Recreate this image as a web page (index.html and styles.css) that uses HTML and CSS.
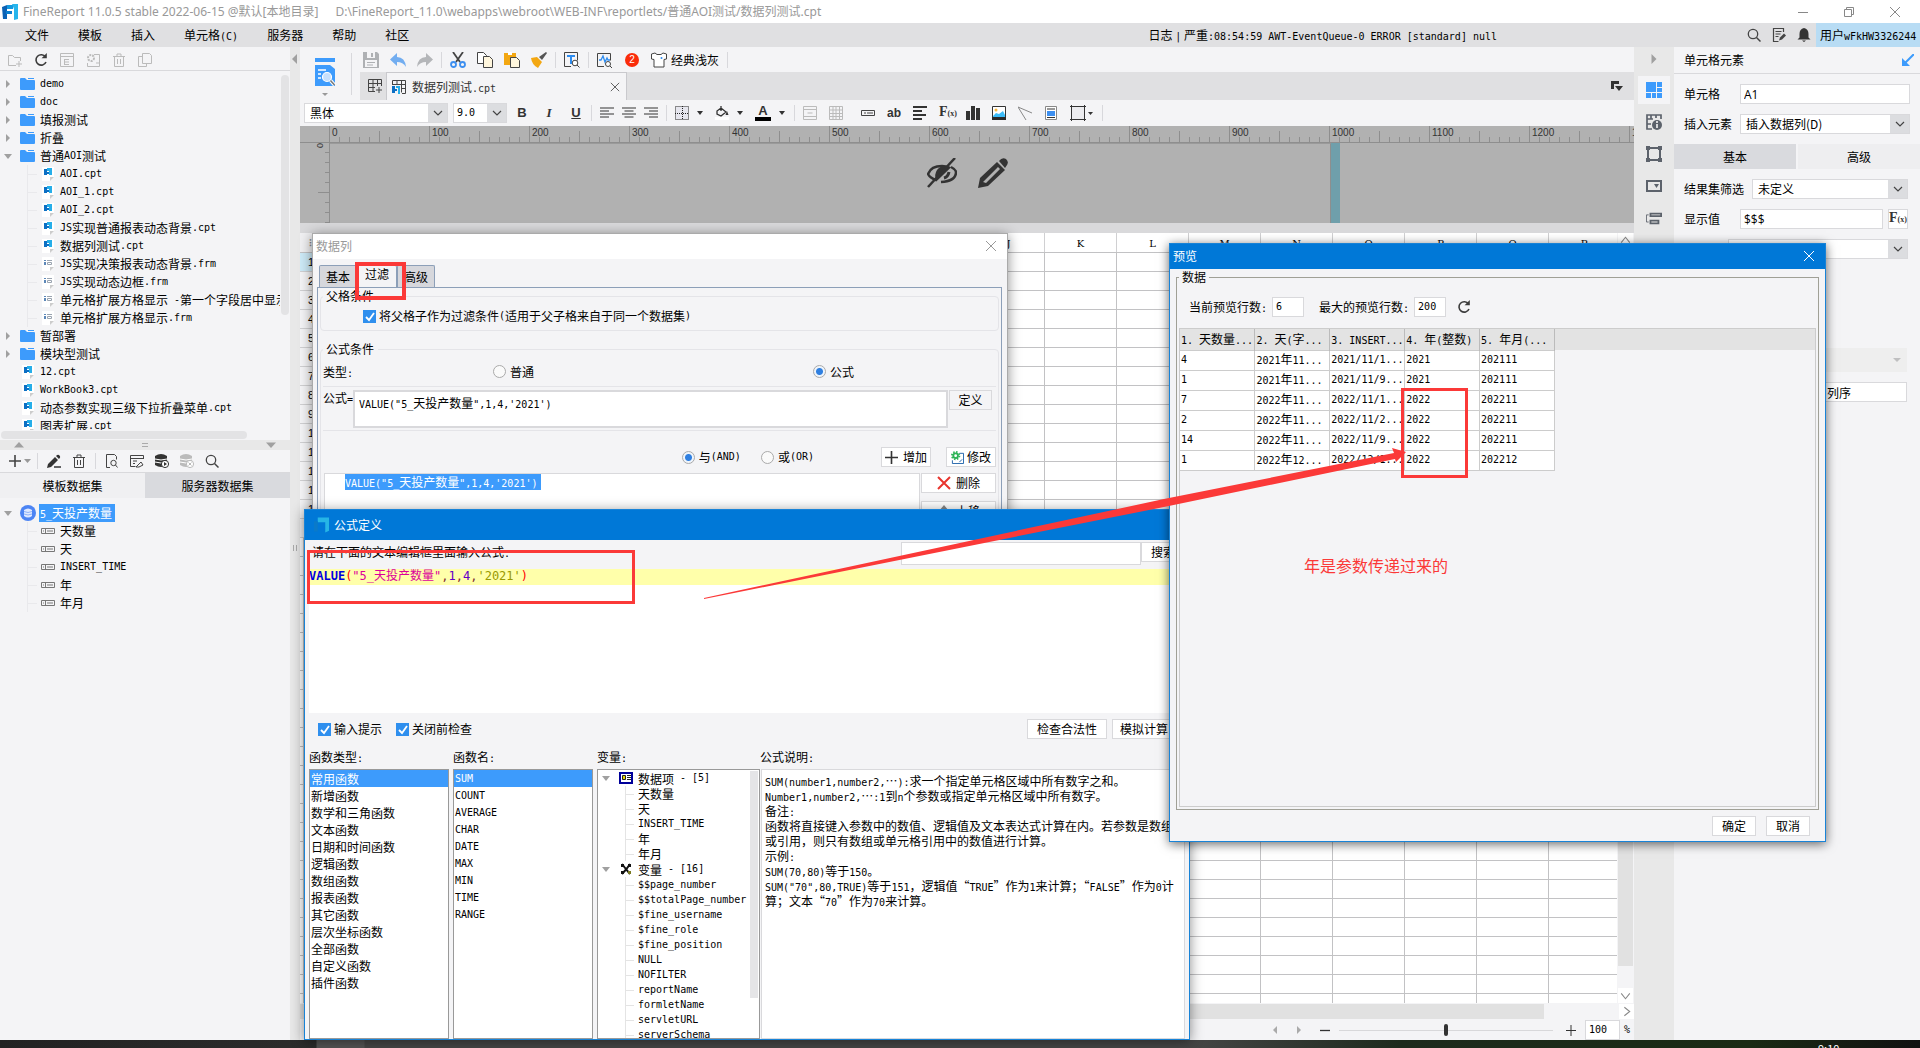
FILE: index.html
```html
<!DOCTYPE html>
<html lang="zh-CN">
<head>
<meta charset="utf-8">
<title>FineReport 11.0.5</title>
<link rel="stylesheet" href="styles.css">
</head>
<body>
<svg class="defs" aria-hidden="true">
  <symbol id="logo" viewBox="0 0 16 16"><path d="M0 3l5-2v14H1z" fill="#0b62b5"/><path d="M5 1h6v4H5z" fill="#1499e0"/><path d="M4 7h6v3H4z" fill="#0b7fd0"/><path d="M10 0h6v15l-4 1V5z" fill="#26b5ec"/></symbol>
  <symbol id="folder" viewBox="0 0 15 12"><path d="M0 1q0-1 1-1h4l2 2h7q1 0 1 1v8q0 1-1 1H1q-1 0-1-1z" fill="#3d9bfc"/><path d="M8 .5h6" stroke="#3d9bfc" fill="none"/></symbol>
  <symbol id="cpt" viewBox="0 0 12 14"><path d="M0 0h12v10l-4 4H0z" fill="#fff"/><path d="M8 14v-4h4z" fill="#ccc"/><path d="M2 2h3v6H2zM5 5h2v2H5z" fill="#0b6fc4"/><path d="M5 1h5v7H7V4H5z" fill="#26aee9"/></symbol>
  <symbol id="frm" viewBox="0 0 12 14"><path d="M0 0h12v10l-4 4H0z" fill="#fff"/><path d="M8 14v-4h4z" fill="#ccc"/><path d="M2 3h2v1H2zM2 5h2v3H2z" fill="#5c87b8"/><path d="M5 3.500h5M5.500 5.500h4v2h-4z" stroke="#9aa4b0" fill="none"/></symbol>
  <symbol id="field" viewBox="0 0 14 6"><path d="M.5.5h13v5H.5zM4.500 1v4M6 3h6M2 3h1" stroke="#777" fill="none"/></symbol>
  <symbol id="open" viewBox="0 0 8 8"><path d="M0 2h8L4 7z" fill="#a0a0a0"/></symbol>
  <symbol id="shut" viewBox="0 0 8 8"><path d="M2 0v8l4-4z" fill="#a0a0a0"/></symbol>
  <symbol id="refresh" viewBox="0 0 14 14"><path d="M11.500 4A5.200 5.200 0 1 0 12 9" stroke="#3c3c3c" stroke-width="1.600" fill="none"/><path d="M12.800 0v5.200H7.600z" fill="#3c3c3c"/></symbol>
  <symbol id="trash" viewBox="0 0 14 14"><path d="M1 3.500h12M5 3V1h4v2M2.500 4v9.500h9V4M5.500 6v5M8.500 6v5" stroke="currentColor" fill="none"/></symbol>
  <symbol id="search" viewBox="0 0 14 14"><circle cx="6" cy="6" r="4.700" stroke="#444" stroke-width="1.300" fill="none"/><path d="M9.500 9.500l4 4" stroke="#444" stroke-width="1.500"/></symbol>
  <symbol id="close" viewBox="0 0 12 12"><path d="M1 1l10 10M11 1L1 11" stroke="currentColor" fill="none"/></symbol>
  <symbol id="caret" viewBox="0 0 8 8"><path d="M1 2h6L4 6z" fill="#333"/></symbol>
  <symbol id="al" viewBox="0 0 14 12"><path d="M0 1h14M0 4h9M0 7h14M0 10h9" stroke="#333" stroke-width="1.200"/></symbol>
  <symbol id="ac" viewBox="0 0 14 12"><path d="M0 1h14M2.500 4h9M0 7h14M2.500 10h9" stroke="#333" stroke-width="1.200"/></symbol>
  <symbol id="ar" viewBox="0 0 14 12"><path d="M0 1h14M5 4h9M0 7h14M5 10h9" stroke="#333" stroke-width="1.200"/></symbol>
</svg>

<header class="titlebar">
  <svg class="i16"><use href="#logo"/></svg>
  <span class="app-name">FineReport 11.0.5 stable 2022-06-15 @默认[本地目录]</span>
  <span>D:\FineReport_11.0\webapps\webroot\WEB-INF\reportlets/普通AOI测试/数据列测试.cpt</span>
  <div class="win-buttons">
    <svg viewBox="0 0 12 12"><path d="M1 6.500h10" stroke="#888"/></svg>
    <svg viewBox="0 0 12 12"><path d="M1.500 3.500h7v7h-7zM3.500 3V1.500h7v7H9" stroke="#888" fill="none"/></svg>
    <svg><use href="#close"/></svg>
  </div>
</header>

<nav class="menubar">
  <a href="#">文件</a><a href="#">模板</a><a href="#">插入</a><a href="#">单元格<span class="en">(C)</span></a><a href="#">服务器</a><a href="#">帮助</a><a href="#">社区</a>
  <span class="log">日志 <span class="en">|</span> 严重<span class="en">:08:54:59 AWT-EventQueue-0 ERROR [standard] null</span></span>
  <span class="menu-icons">
    <svg><use href="#search"/></svg>
    <svg viewBox="0 0 14 14"><path d="M11.500 4V.5h-10v13h5M3.500 3.500h6M3.500 6h5M3.500 8.500h3" stroke="#444" fill="none" stroke-width="1.200"/><path d="M7 12.500l1-3 4-4 2 2-4 4z" fill="#444"/></svg>
    <svg viewBox="0 0 14 14"><path d="M7 0q4.500 1 4.500 6v3.500l2 2H.5l2-2V6Q2.500 1 7 0zM5 12.500h4L7 14z" fill="#333"/></svg>
  </span>
  <a href="#" class="user">用户<span class="en">wFkHW3326244</span></a>
</nav>

<main class="workspace">
  <aside class="left">
    <div class="bar files-bar">
      <svg viewBox="0 0 14 14"><path d="M8 12.500H.5v-10h4l2 2h6V8M11 8v6M8 11h6" stroke="#bbb" fill="none"/></svg>
      <svg><use href="#refresh"/></svg>
      <svg viewBox="0 0 14 14"><path d="M.5.5h13v13H.5zM.5 3.500h13M4.500 6v6M5 6.500h4M5 9h4M5 11.500h4" stroke="#bbb" fill="none"/></svg>
      <svg viewBox="0 0 14 14"><circle cx="5" cy="5" r="3" stroke="#bbb" stroke-width="2" stroke-dasharray="2 1" fill="none"/><path d="M8 1.500h5.500v12H1.500V10M10 10h3" stroke="#bbb" fill="none"/></svg>
      <svg class="dim"><use href="#trash"/></svg>
      <svg viewBox="0 0 14 14"><path d="M4.500.5h7l2 2v8h-9zM4 3.500H.5v10h8V11" stroke="#bbb" fill="none"/></svg>
    </div>
    <div class="tree-scroll">
      <div class="tree-area">
        <ul class="tree">
          <li><svg class="tw"><use href="#shut"/></svg><svg class="fd"><use href="#folder"/></svg><span class="en">demo</span></li>
          <li><svg class="tw"><use href="#shut"/></svg><svg class="fd"><use href="#folder"/></svg><span class="en">doc</span></li>
          <li><svg class="tw"><use href="#shut"/></svg><svg class="fd"><use href="#folder"/></svg>填报测试</li>
          <li><svg class="tw"><use href="#shut"/></svg><svg class="fd"><use href="#folder"/></svg>折叠</li>
          <li><svg class="tw"><use href="#open"/></svg><svg class="fd"><use href="#folder"/></svg>普通<span class="en">AOI</span>测试</li>
          <li class="kid"><svg class="fl"><use href="#cpt"/></svg><span class="en">AOI.cpt</span></li>
          <li class="kid"><svg class="fl"><use href="#cpt"/></svg><span class="en">AOI_1.cpt</span></li>
          <li class="kid"><svg class="fl"><use href="#cpt"/></svg><span class="en">AOI_2.cpt</span></li>
          <li class="kid"><svg class="fl"><use href="#cpt"/></svg><span class="en">JS</span>实现普通报表动态背景<span class="en">.cpt</span></li>
          <li class="kid"><svg class="fl"><use href="#cpt"/></svg>数据列测试<span class="en">.cpt</span></li>
          <li class="kid"><svg class="fl"><use href="#frm"/></svg><span class="en">JS</span>实现决策报表动态背景<span class="en">.frm</span></li>
          <li class="kid"><svg class="fl"><use href="#frm"/></svg><span class="en">JS</span>实现动态边框<span class="en">.frm</span></li>
          <li class="kid"><svg class="fl"><use href="#frm"/></svg>单元格扩展方格显示<span class="en"> -</span>第一个字段居中显示<span class="en">.frm</span></li>
          <li class="kid"><svg class="fl"><use href="#frm"/></svg>单元格扩展方格显示<span class="en">.frm</span></li>
          <li><svg class="tw"><use href="#shut"/></svg><svg class="fd"><use href="#folder"/></svg>暂部署</li>
          <li><svg class="tw"><use href="#shut"/></svg><svg class="fd"><use href="#folder"/></svg>模块型测试</li>
          <li class="root-file"><svg class="fl"><use href="#cpt"/></svg><span class="en">12.cpt</span></li>
          <li class="root-file"><svg class="fl"><use href="#cpt"/></svg><span class="en">WorkBook3.cpt</span></li>
          <li class="root-file"><svg class="fl"><use href="#cpt"/></svg>动态参数实现三级下拉折叠菜单<span class="en">.cpt</span></li>
          <li class="root-file"><svg class="fl"><use href="#cpt"/></svg>图表扩展<span class="en">.cpt</span></li>
        </ul>
        <div class="vthumb"></div>
      </div>
      <div class="hthumb"></div>
    </div>
    <div class="hsplit"><svg viewBox="0 0 10 6"><path d="M0 5.500h10L5 0z" fill="#a0a0a0"/></svg><svg viewBox="0 0 10 6"><path d="M2 1.500h6M2 4.500h6" stroke="#aaa"/></svg><svg viewBox="0 0 10 6"><path d="M0 .5h10L5 6z" fill="#a0a0a0"/></svg></div>
    <div class="bar data-bar">
      <svg class="wide" viewBox="0 0 22 14"><path d="M6 1v12M0 7h12" stroke="#444" stroke-width="1.600"/><path d="M15 5h7l-3.500 4z" fill="#999"/></svg>
      <span class="sep"></span>
      <svg viewBox="0 0 14 14"><path d="M0 14l1-4 7-7 3 3-7 7zM9 2q2-2 3.500-.5T12 5z" fill="#333"/><path d="M7 13h7" stroke="#333" stroke-width="1.500"/></svg>
      <svg><use href="#trash"/></svg>
      <span class="sep"></span>
      <svg viewBox="0 0 14 14"><path d="M5 13.500H1.500V.5h8l2 2v3" stroke="#444" fill="none"/><circle cx="8.500" cy="9" r="2.700" stroke="#444" fill="none"/><path d="M10.500 11l2 2.500" stroke="#444"/></svg>
      <svg viewBox="0 0 14 14"><path d="M13.500 5V1.500H.5v11h5M.5 4.500h13M3 7h4M3 9.500h2" stroke="#444" fill="none"/><path d="M6 13l5-5 2 3-4 2z" fill="none" stroke="#444"/></svg>
      <svg viewBox="0 0 14 14"><path d="M0 2q6-4 12 0v9q-6 4-12 0z" fill="#333"/><path d="M0 5q6 2 12 0M0 8q6 2 12 0" stroke="#fff" fill="none"/><circle cx="10" cy="10" r="3.600" fill="#fff" stroke="#333"/><path d="M9 8v4l3-2z" fill="#333"/></svg>
      <svg viewBox="0 0 14 14"><path d="M0 2q6-4 12 0v9q-6 4-12 0z" fill="#bbb"/><path d="M0 5q6 2 12 0M0 8q6 2 12 0" stroke="#fff" fill="none"/><circle cx="10" cy="10" r="3.600" fill="#fff" stroke="#bbb"/><path d="M8.500 8.500l3 3M11.500 8.500l-3 3" stroke="#bbb"/></svg>
      <svg><use href="#search"/></svg>
    </div>
    <div class="tabs2"><button class="on">模板数据集</button><button>服务器数据集</button></div>
    <ul class="tree datasets">
      <li><svg class="tw"><use href="#open"/></svg><svg class="db" viewBox="0 0 16 16"><circle cx="8" cy="8" r="8" fill="#4c84f4"/><path d="M4 5q4-3 8 0v6q-4 3-8 0z" fill="#dfe9ff"/><path d="M4 6.500q4 2 8 0M4 9q4 2 8 0" stroke="#8fb2f8" fill="none"/></svg><span class="picked"><span class="en">5_</span>天投产数量</span></li>
      <li class="kid"><svg class="fi"><use href="#field"/></svg>天数量</li>
      <li class="kid"><svg class="fi"><use href="#field"/></svg>天</li>
      <li class="kid"><svg class="fi"><use href="#field"/></svg><span class="en">INSERT_TIME</span></li>
      <li class="kid"><svg class="fi"><use href="#field"/></svg>年</li>
      <li class="kid"><svg class="fi"><use href="#field"/></svg>年月</li>
    </ul>
  </aside>
  <div class="vsplit"><svg viewBox="0 0 6 10"><path d="M5 0v10L0 5z" fill="#a0a0a0"/></svg><svg class="grip" viewBox="0 0 6 10"><path d="M1.500 2v6M4.500 2v6" stroke="#aaa"/></svg></div>

  <section class="center">
    <div class="tools">
      <button class="preview-btn" aria-label="预览"><svg viewBox="0 0 22 40"><path d="M1 1h20v4H1zM1 8h15l5 4v17H1z" fill="#3d9bfc"/><path d="M4 13h8M4 17h3M4 21h3" stroke="#fff" stroke-width="1.500"/><circle cx="13" cy="20" r="4.500" fill="#c6e0fd" stroke="#fff" stroke-width="1.200"/><path d="M16.500 23.500l4 4.500" stroke="#fff" stroke-width="3.500"/><path d="M16.500 23.500l4 4.500" stroke="#777" stroke-width="1.500"/><path d="M8 36h6l-3 3z" fill="#999"/></svg></button>
      <span class="sep tall"></span>
      <div class="tools-right">
        <div class="row1">
          <svg viewBox="0 0 16 16"><path d="M0 0h14l2 2v14H0z" fill="#aeb0b3"/><path d="M4 0h8v6H4zM2 8h12v7H2z" fill="#f4f4f6"/><path d="M8 1h2v4H8zM4 10h8v1H4zM4 12.500h6v1H4z" fill="#aeb0b3"/></svg>
          <svg viewBox="0 0 16 16"><path d="M7 1v4q8 0 9 10-3-5-9-5v4L0 7.500z" fill="#72adf0"/></svg>
          <svg viewBox="0 0 16 16"><path d="M9 1v4Q1 5 0 15q3-5 9-5v4l7-6.500z" fill="#b4b6b9"/></svg>
          <span class="sep"></span>
          <svg viewBox="0 0 16 16"><path d="M3 0l7 10M13 0L6 10" stroke="#444" stroke-width="1.800"/><circle cx="3.500" cy="12.500" r="2.500" fill="none" stroke="#3d8ff0" stroke-width="1.800"/><circle cx="12.500" cy="12.500" r="2.500" fill="none" stroke="#3d8ff0" stroke-width="1.800"/></svg>
          <svg viewBox="0 0 16 16"><path d="M.5.500h6l3 3v8h-9z" fill="#fff" stroke="#444"/><path d="M6.500 4.500h6l3 3v8h-9z" fill="#fff6dd" stroke="#444"/></svg>
          <svg viewBox="0 0 16 16"><path d="M0 1h12v12H0z" fill="#f3a712"/><path d="M4 0h4v3H4z" fill="#fff"/><path d="M6.500 5.500h6l3 3v7h-9z" fill="#fff6dd" stroke="#444"/></svg>
          <svg viewBox="0 0 16 16"><path d="M0 6l6-1 5 5-4 6Q1 13 0 6z" fill="#f3a712"/><path d="M8 5l3 3 5-7-1-1z" fill="#555"/></svg>
          <span class="sep"></span>
          <svg viewBox="0 0 16 16"><path d="M7 14.500H.5V.5h13v8" stroke="#444" fill="none"/><path d="M3 3h8v2H8v7H6V5H3z" fill="#2d8cf0"/><circle cx="11" cy="11" r="2.800" fill="#fff" stroke="#444"/><path d="M13 13l2.500 2.500" stroke="#444"/></svg>
          <span class="sep"></span>
          <svg viewBox="0 0 16 16"><path d="M7 14.500H.5V1.500h13v7" stroke="#444" fill="none"/><path d="M2 8h2l2-4 2 6 2-4 1 2h2" stroke="#2d8cf0" fill="none" stroke-width="1.300"/><circle cx="11" cy="12" r="2.500" fill="#fff" stroke="#444"/><path d="M13 14l2 2" stroke="#444"/></svg>
          <span class="badge">2</span>
          <button class="theme"><svg viewBox="0 0 16 16"><path d="M4 1l2 1.500h4L12 1l3.500 1v5L13 7.500v7.500H3V7.500L.5 7V2z" fill="#fff" stroke="#444"/><circle cx="10.500" cy="6" r="1" fill="#2d8cf0"/></svg>经典浅灰</button>
          <span class="sep"></span>
        </div>
        <div class="doc-tabs">
          <svg class="new" viewBox="0 0 14 14"><path d="M7 12.500H.5V.5h13V7M.5 4.500h13M.5 8.500H7M5 .5v12M9.500.5V7M11 8v6M8 11h6" stroke="#444" fill="none"/></svg>
          <div class="doc-tab"><svg viewBox="0 0 14 14"><path d="M.5 5V.5h13v13H10M.5 4.500h13M5 .5V4M9.500.5v12M10 8.500h4" stroke="#444" fill="none"/><path d="M0 6h3v7H0zM3 9h2v2H3z" fill="#0b6fc4"/><path d="M4 6h4v8H6V8H4z" fill="#26aee9"/></svg><span>数据列测试<span class="en">.cpt</span></span><svg class="x"><use href="#close"/></svg></div>
          <svg class="more" viewBox="0 0 12 10"><path d="M0 0h8v3H3v5H0zM4 5h8l-4 5z" fill="#333"/></svg>
        </div>
      </div>
    </div>
    <div class="format">
      <select class="font-name" aria-label="字体"><option>黑体</option></select>
      <select class="font-size" aria-label="字号"><option>9.0</option></select>
      <button class="b">B</button><button class="b it">I</button><button class="b un">U</button>
      <span class="sep"></span>
      <svg><use href="#al"/></svg><svg><use href="#ac"/></svg><svg><use href="#ar"/></svg>
      <span class="sep"></span>
      <svg viewBox="0 0 14 14"><path d="M.5.5h13v13H.5zM7.500 0v14M0 7.500h14" stroke="#222" stroke-dasharray="1 1" fill="#e6e6ee"/></svg><svg class="c"><use href="#caret"/></svg>
      <svg viewBox="0 0 14 14"><path d="M2 5l4-3 5 4-5 4-4-2zM6 0v5" stroke="#333" fill="none" stroke-width="1.300"/><path d="M12 5l1.500 4h-3z" fill="#333"/><path d="M0 11h14v3H0z" fill="#fff"/></svg><svg class="c"><use href="#caret"/></svg>
      <span class="color-a">A</span><svg class="c"><use href="#caret"/></svg>
      <span class="sep"></span>
      <svg viewBox="0 0 14 14"><path d="M.5.5h13v13H.5zM.5 3.500h13M.5 10.500h13M4.500 7h5" stroke="#bbb" fill="none"/></svg>
      <svg viewBox="0 0 14 14"><path d="M.5.5h13v13H.5zM.5 4h13M.5 7.500h13M.5 10.500h13M4 .5v13M7 .5v13M10.500.5v13" stroke="#bbb" fill="none"/></svg>
      <svg class="widget" viewBox="0 0 14 14"><path d="M.5 4.500h13v5H.5zM3 7h2M6 7h6" stroke="#444" fill="none"/></svg>
      <span class="ab">ab</span>
      <svg viewBox="0 0 14 14"><path d="M0 1h14M0 5h9M0 9h13M0 13h9" stroke="#333" stroke-width="2"/></svg>
      <span class="fx">F<small>(x)</small></span>
      <svg viewBox="0 0 14 14"><path d="M0 5h4v9H0zM5 0h4v14H5zM10 2h4v12h-4z" fill="#333"/></svg>
      <svg viewBox="0 0 14 14"><path d="M.5.5h13v12H.5z" fill="#fff" stroke="#333"/><path d="M1 10l3-3 3 1 4-3 2 4v2H1z" fill="#3cbcf8"/><path d="M0 11h14v3H0z" fill="#2a2a2a"/><circle cx="4" cy="4" r="1.500" fill="#f9b73c"/></svg>
      <svg viewBox="0 0 14 14"><path d="M0 1l14 6M0 1l8 13" stroke="#888" fill="none"/></svg>
      <svg viewBox="0 0 14 14"><path d="M1.500.5h11v13h-11z" fill="#fff" stroke="#888"/><path d="M3 3h8M3 11.500h8" stroke="#333"/><path d="M3 5h8v5H3z" fill="#3d8ff0"/></svg>
      <svg class="shape" viewBox="0 0 24 16"><path d="M1.500 1.500h13v13h-13z" fill="#ececef"/><path d="M0 1.500h16M0 14.500h16M1.500 0v16M14.500 0v16" stroke="#333"/><path d="M18 7h5l-2.500 3z" fill="#333"/></svg>
      <span class="sep"></span>
    </div>
    <div class="ruler"><div class="marks"><span>0</span><span>100</span><span>200</span><span>300</span><span>400</span><span>500</span><span>600</span><span>700</span><span>800</span><span>900</span><span>1000</span><span>1100</span><span>1200</span><span>1300</span></div></div>
    <div class="param">
      <div class="vruler"><span>0</span></div>
      <div class="param-canvas">
        <svg viewBox="0 0 30 30"><path d="M1 16Q4 8 15 8q4 0 7 1.500L9 22Q3 20 1 16z" fill="none" stroke="#333" stroke-width="2.500"/><path d="M10 12q5-6 11-3L9 21q-2-4 1-9z" fill="#333"/><path d="M29 14q0 9-15 10M24 9q6 3 5 7" stroke="#333" stroke-width="2.500" fill="none"/><path d="M28 0L1 29" stroke="#333" stroke-width="2.500"/><path d="M17 20q4-1 5-6" stroke="#333" stroke-width="3" fill="none"/></svg>
        <svg viewBox="0 0 30 30"><path fill-rule="evenodd" d="M0 30l2-10L19 4l8 8L10 28zM5 24L20 9l2 2L8 25z" fill="#333"/><path d="M21 3q3-4 7-2 3 3 1 6l-2 3z" fill="#333"/></svg>
      </div>
      <div class="param-edge"></div>
    </div>
    <div class="gap-strip"></div>
    <div class="sheet">
      <div class="sheet-main">
        <div class="cols"><span class="corner">⠿</span><span>A</span><span>B</span><span>C</span><span>D</span><span>E</span><span>F</span><span>G</span><span>H</span><span>I</span><span>J</span><span>K</span><span>L</span><span>M</span><span>N</span><span>O</span><span>P</span><span>Q</span><span>R</span></div>
        <div class="grid"><ol class="rownums"><li>1</li><li>2</li><li>3</li><li>4</li><li>5</li><li>6</li><li>7</li><li>8</li><li>9</li><li>10</li><li>11</li><li>12</li><li>13</li><li>14</li><li>15</li></ol></div>
      </div>
      <div class="vscroll"><svg viewBox="0 0 14 14"><path d="M3 9l4-5 4 5" stroke="#888" fill="none"/></svg><div></div><svg viewBox="0 0 14 14"><path d="M3 5l4 5 4-5" stroke="#888" fill="none"/></svg></div>
    </div>
    <div class="hscroll"><div></div><svg viewBox="0 0 14 14"><path d="M5 3l5 4-5 4" stroke="#888" fill="none"/></svg></div>
    <div class="status">
      <svg viewBox="0 0 8 8"><path d="M6 0v8L2 4z" fill="#aaa"/></svg><svg viewBox="0 0 8 8"><path d="M2 0v8l4-4z" fill="#aaa"/></svg>
      <svg class="pm" viewBox="0 0 12 12"><path d="M1 6.500h10" stroke="#333" stroke-width="1.300"/></svg>
      <input type="range" aria-label="缩放">
      <svg class="pm" viewBox="0 0 12 12"><path d="M1 6.500h10M6 1v11" stroke="#333"/></svg>
      <input class="zoom en" value="100" aria-label="百分比"><span class="en">%</span>
    </div>
  </section>

  <nav class="strip">
    <svg class="fold"><use href="#shut"/></svg>
    <button class="on" aria-label="单元格元素"><svg viewBox="0 0 16 16"><path d="M0 0h10v10H0zM11 0h5v5h-5zM11 6h5v4h-5zM0 11h5v5H0zM6 11h4v5H6zM11 11h5v5h-5z" fill="#3d9bfc"/></svg></button>
    <button aria-label="单元格属性"><svg viewBox="0 0 16 16"><path d="M6 15H1V1h14v4M1 5h6M1 10h4M5 1v4M10 1v3" stroke="#5c626b" stroke-width="1.700" fill="none"/><circle cx="11" cy="11" r="5" fill="#5c626b"/><path d="M11 7v2M11 10v4" stroke="#fff" stroke-width="1.500"/></svg></button>
    <button aria-label="悬浮元素"><svg viewBox="0 0 16 16"><path d="M2 2h12v12H2z" fill="none" stroke="#5c626b" stroke-width="2"/><path d="M0 0h4v4H0zM12 0h4v4h-4zM0 12h4v4H0zM12 12h4v4h-4z" fill="#5c626b"/></svg></button>
    <button aria-label="控件设置"><svg viewBox="0 0 16 16"><path d="M1 3h14v10H1z" fill="none" stroke="#5c626b" stroke-width="2"/><path d="M8 6h5l-2.500 4z" fill="#5c626b"/></svg></button>
    <button aria-label="条件属性"><svg viewBox="0 0 18 16"><path d="M5 3h12v3H5zM5 11h9v3H5z" fill="none" stroke="#5c626b" stroke-width="2"/><path d="M3 4.500H.5v8H3" fill="none" stroke="#5c626b"/></svg></button>
  </nav>

  <aside class="right">
    <h2>单元格元素<svg viewBox="0 0 12 12"><path d="M12 0L3 9" stroke="#3d9bfc" stroke-width="2"/><path d="M0 4v8h8z" fill="#3d9bfc"/></svg></h2>
    <div class="prop"><label for="cell">单元格</label><input id="cell" class="sans" value="A1"></div>
    <div class="prop"><label for="ins">插入元素</label><select id="ins"><option>插入数据列(D)</option></select></div>
    <div class="tabs2 props-tabs"><button>基本</button><button class="on">高级</button></div>
    <div class="prop wide-label"><label for="flt">结果集筛选</label><select id="flt"><option>未定义</option></select></div>
    <div class="prop narrow"><label for="val">显示值</label><input id="val" class="sans" value="$$$"><button class="fx">F<small>(x)</small></button></div>
    <div class="prop narrow"><select aria-label="扩展"><option></option></select></div>
    <div class="lower"><select class="flat" aria-label="排序" disabled><option></option></select><input class="order" value="列序" aria-label="列序"></div>
  </aside>
</main>
<footer class="taskbar"><time>9:10</time></footer>

<section class="win column-dialog">
  <div class="win-title light">数据列<svg><use href="#close"/></svg></div>
  <div class="dlg-tabs"><button>基本</button><button class="on">过滤</button><button>高级</button></div>
  <div class="pane">
    <fieldset><legend>父格条件</legend>
      <label class="parent"><input type="checkbox" checked>将父格子作为过滤条件<span class="en">(</span>适用于父子格来自于同一个数据集<span class="en">)</span></label>
    </fieldset>
    <fieldset class="cond"><legend>公式条件</legend>
      <div class="kinds"><span>类型<span class="en">:</span></span><label><input type="radio" name="kind">普通</label><label><input type="radio" name="kind" checked>公式</label></div>
      <div class="formula"><label for="fm">公式<span class="en">=</span></label><div id="fm" class="box" contenteditable="true"><span class="en">VALUE("5_</span>天投产数量<span class="en">",1,4,'2021')</span></div><button class="btn">定义</button></div>
      <div class="logic"><label><input type="radio" name="op" checked>与<span class="en">(AND)</span></label><label><input type="radio" name="op">或<span class="en">(OR)</span></label>
        <button class="btn add"><svg viewBox="0 0 12 12"><path d="M6 0v12M0 6h12" stroke="#333" stroke-width="1.500"/></svg>增加</button>
        <button class="btn edit"><svg viewBox="0 0 14 14"><path d="M9 2.500h4.500v11H1.500V10M9 12l3-3" stroke="#1a5fa8" fill="none"/><circle cx="5" cy="5" r="2.500" fill="none" stroke="#2fb457" stroke-width="2"/><circle cx="5" cy="5" r="4" fill="none" stroke="#2fb457" stroke-width="2" stroke-dasharray="1.600 1.540"/></svg>修改</button></div>
      <div class="conds"><div class="cond-list"><span class="picked"><span class="en">VALUE("5_</span>天投产数量<span class="en">",1,4,'2021')</span></span></div>
        <div class="cond-btns"><button class="btn"><svg viewBox="0 0 14 14"><path d="M1 1l12 12M13 1L1 13" stroke="#e8352e" stroke-width="2"/></svg>删除</button><button class="btn" disabled><svg viewBox="0 0 14 14"><path d="M7 1l5 6H9v6H5V7H2z" fill="#888"/></svg>上移</button></div></div>
    </fieldset>
  </div>
</section>

<section class="win formula-dialog">
  <div class="win-title"><svg class="i16" viewBox="0 0 16 16"><path d="M4 0h12v14l-4 2V5H4z" fill="#26b5e6"/><path d="M0 4h4v11H0z" fill="#0a7ac9"/></svg>公式定义</div>
  <div class="ask"><label for="q">请在下面的文本编辑框里面输入公式<span class="en">:</span></label><input id="q"><button class="btn">搜索</button></div>
  <div class="editor"><div><b>VALUE</b><i class="p">(</i><i class="s">"5_天投产数量"</i><i class="k">,</i><i class="n">1</i><i class="k">,</i><i class="n">4</i><i class="k">,</i><i class="c">'2021'</i><i class="p">)</i></div></div>
  <div class="checks"><label><input type="checkbox" checked>输入提示</label><label><input type="checkbox" checked>关闭前检查</label><button class="btn verify">检查合法性</button><button class="btn">模拟计算</button></div>
  <div class="lists">
    <h3>函数类型<span class="en">:</span></h3><h3>函数名<span class="en">:</span></h3><h3>变量<span class="en">:</span></h3><h3 class="last">公式说明<span class="en">:</span></h3>
    <ul class="list"><li class="picked">常用函数</li><li>新增函数</li><li>数学和三角函数</li><li>文本函数</li><li>日期和时间函数</li><li>逻辑函数</li><li>数组函数</li><li>报表函数</li><li>其它函数</li><li>层次坐标函数</li><li>全部函数</li><li>自定义函数</li><li>插件函数</li></ul>
    <ul class="list en"><li class="picked">SUM</li><li>COUNT</li><li>AVERAGE</li><li>CHAR</li><li>DATE</li><li>MAX</li><li>MIN</li><li>TIME</li><li>RANGE</li></ul>
    <ul class="vars">
      <li class="top"><svg class="tw"><use href="#open"/></svg><svg class="vi" viewBox="0 0 14 12"><path d="M1 1h12v10H1z" fill="#fff" stroke="#00009a" stroke-width="2"/><path d="M3.500 3.500h3v4h-3z" fill="#e8d400" stroke="#222"/><path d="M8 3.500h4M8 5.500h4M8 7.500h4" stroke="#222"/></svg>数据项<span class="en"> - [5]</span></li>
      <li>天数量</li><li>天</li><li class="en">INSERT_TIME</li><li>年</li><li>年月</li>
      <li class="top"><svg class="tw"><use href="#open"/></svg><svg class="vi" viewBox="0 0 14 12"><path d="M3 1q3 4 8 10M11 1Q8 6 3 11" stroke="#111" stroke-width="2" fill="none"/><path d="M2 1h3v3H2zM9 1h3v3H9zM2 8h3v3H2z" fill="#111"/><path d="M9 8h3v3H9z" fill="#7a7a20"/></svg>变量<span class="en"> - [16]</span></li>
      <li class="en">$$page_number</li><li class="en">$$totalPage_number</li><li class="en">$fine_username</li><li class="en">$fine_role</li><li class="en">$fine_position</li><li class="en">NULL</li><li class="en">NOFILTER</li><li class="en">reportName</li><li class="en">formletName</li><li class="en">servletURL</li><li class="en">serverSchema</li>
    </ul>
    <div class="explain">
      <p><span class="en">SUM(number1,number2,</span>…<span class="en">):</span>求一个指定单元格区域中所有数字之和。</p>
      <p><span class="en">Number1,number2,</span>…<span class="en">:1</span>到<span class="en">n</span>个参数或指定单元格区域中所有数字。</p>
      <p>备注<span class="en">:</span></p>
      <p>函数将直接键入参数中的数值、逻辑值及文本表达式计算在内。若参数是数组<br>或引用，则只有数组或单元格引用中的数值进行计算。</p>
      <p>示例<span class="en">:</span></p>
      <p><span class="en">SUM(70,80)</span>等于<span class="en">150</span>。</p>
      <p><span class="en">SUM("70",80,TRUE)</span>等于<span class="en">151</span>，逻辑值“<span class="en">TRUE</span>”作为<span class="en">1</span>来计算；“<span class="en">FALSE</span>”作为<span class="en">0</span>计<br>算；文本“<span class="en">70</span>”作为<span class="en">70</span>来计算。</p>
    </div>
  </div>
</section>

<section class="win preview-dialog">
  <div class="win-title">预览<svg><use href="#close"/></svg></div>
  <fieldset><legend>数据</legend>
    <div class="counts"><label for="n1">当前预览行数<span class="en">:</span></label><input id="n1" class="en" value="6"><label for="n2">最大的预览行数<span class="en">:</span></label><input id="n2" class="en" value="200"><svg><use href="#refresh"/></svg></div>
    <div class="table-box"><table>
      <thead><tr><th><span class="en">1. </span>天数量<span class="en">...</span></th><th><span class="en">2. </span>天<span class="en">(</span>字<span class="en">...</span></th><th><span class="en">3. INSERT...</span></th><th><span class="en">4. </span>年<span class="en">(</span>整数<span class="en">)</span></th><th><span class="en">5. </span>年月<span class="en">(...</span></th></tr></thead>
      <tbody class="en">
        <tr><td>4</td><td>2021<span class="zh">年</span>11...</td><td>2021/11/1...</td><td>2021</td><td>202111</td></tr>
        <tr><td>1</td><td>2021<span class="zh">年</span>11...</td><td>2021/11/9...</td><td>2021</td><td>202111</td></tr>
        <tr><td>7</td><td>2022<span class="zh">年</span>11...</td><td>2022/11/1...</td><td>2022</td><td>202211</td></tr>
        <tr><td>2</td><td>2022<span class="zh">年</span>11...</td><td>2022/11/2...</td><td>2022</td><td>202211</td></tr>
        <tr><td>14</td><td>2022<span class="zh">年</span>11...</td><td>2022/11/9...</td><td>2022</td><td>202211</td></tr>
        <tr><td>1</td><td>2022<span class="zh">年</span>12...</td><td>2022/12/1...</td><td>2022</td><td>202212</td></tr>
      </tbody></table></div>
  </fieldset>
  <div class="ok-row"><button class="btn">确定</button><button class="btn">取消</button></div>
</section>

<div class="mark mark-tab"></div>
<div class="mark mark-formula"></div>
<div class="mark mark-years"></div>
<svg class="arrow" viewBox="0 0 702 152"><path d="M0 150L460 51L690 5L688 0L702 4L692 14L691 11L460 59L0 151z" fill="#fb3938"/></svg>
<p class="remark">年是参数传递过来的</p>
</body>
</html>
```
FILE: styles.css
```css
* { box-sizing: border-box; }
body { margin: 0; height: 100vh; overflow: hidden; display: flex; flex-direction: column; position: relative; background: #f4f4f6; color: #000; font: 12px/16px "Noto Sans CJK SC", sans-serif; }
ul, ol, p, h2, h3 { margin: 0; padding: 0; list-style: none; font-size: 12px; font-weight: 400; }
button, input, select { font: inherit; color: inherit; margin: 0; padding: 0; border: 0; background: none; border-radius: 0; }
a { color: inherit; text-decoration: none; }
svg { flex: none; width: 14px; height: 14px; display: block; }
fieldset { margin: 0; min-width: 0; }
.defs { position: absolute; width: 0; height: 0; }
.en { font-family: "DejaVu Sans Mono", "Noto Sans CJK SC", monospace; font-size: 10px; white-space: pre; }
span.en { line-height: 10px; }
ul.en { white-space: normal; }
.zh { font-size: 12px; }
.i16 { width: 16px; height: 16px; }
.picked { background: #3d9bfc; color: #fff; }
.sep { width: 1px; height: 16px; background: #d8d8dc; flex: none; }

.titlebar { height: 23px; flex: none; display: flex; align-items: center; background: #fff; color: #999; padding: 0 19px 0 2px; gap: 5px; font-family: "Noto Sans", "Noto Sans CJK SC", sans-serif; white-space: nowrap; }
.app-name { margin-right: 12px; }
.win-buttons { margin-left: auto; display: flex; gap: 34px; color: #888; }
.win-buttons svg { width: 12px; height: 12px; }
.menubar { height: 24px; flex: none; display: flex; align-items: center; gap: 29px; padding-left: 25px; background: #e0e0e2; white-space: nowrap; }
.log { margin-left: auto; margin-right: 221px; }
.menu-icons { display: flex; gap: 11px; margin-right: -24px; }
.user { align-self: stretch; width: 104px; padding-left: 4px; background: #b8dcf4; line-height: 24px; }

.workspace { flex: 1; min-height: 0; display: flex; }
.left { width: 290px; flex: none; display: flex; flex-direction: column; }
.bar { display: flex; align-items: center; flex: none; border-bottom: 1px solid #d9d9dc; }
.files-bar { height: 24px; padding-left: 8px; gap: 12px; padding-top: 3px; }
.data-bar { height: 23px; padding-left: 9px; gap: 11px; color: #444; }
.data-bar .wide { width: 22px; margin-right: -3px; }
.data-bar .sep { margin: 0 -2px; }
.dim { color: #bbb; }
.tree-scroll { height: 369px; flex: none; display: flex; flex-direction: column; }
.tree-area { flex: 1; min-height: 0; display: flex; overflow: hidden; }
.tree { flex: 1; min-width: 0; overflow: hidden; padding-top: 4px; }
.tree li { height: 18px; display: flex; align-items: center; white-space: nowrap; padding-left: 4px; }
.tree .tw { width: 8px; height: 8px; margin-right: 8px; }
.fd { width: 15px; height: 12px; margin-right: 5px; }
.fl { width: 12px; height: 14px; margin-right: 6px; }
.tree .kid { padding-left: 42px; background: linear-gradient(#e9e9ec, #e9e9ec) 27px 0 / 1px 18px no-repeat, linear-gradient(#e9e9ec, #e9e9ec) 27px 9px / 10px 1px no-repeat; }
.tree .root-file { padding-left: 22px; }
.vthumb { width: 8px; height: 240px; margin: 4px 1px 0; border-radius: 4px; background: #e3e3e5; }
.hthumb { width: 246px; height: 8px; margin: 1px; border-radius: 4px; background: #e3e3e5; }
.hsplit { height: 10px; flex: none; background: #e8e8e8; display: flex; justify-content: space-between; align-items: center; padding: 0 14px; }
.hsplit svg { width: 10px; height: 6px; }
.tabs2 { display: flex; height: 25px; flex: none; }
.tabs2 button { flex: 1; background: #d9dade; }
.tabs2 .on { background: #f0f0f2; }
.datasets { padding-top: 6px; }
.datasets .db { width: 16px; height: 16px; margin-right: 3px; }
.datasets .picked { padding: 0 3px 0 1px; line-height: 18px; }
.datasets .kid { padding-left: 41px; }
.fi { width: 14px; height: 6px; margin-right: 5px; }
.vsplit { width: 10px; flex: none; background: #e8e8e8; padding: 7px 2px; }
.vsplit svg { width: 6px; height: 10px; }
.vsplit .grip { margin-top: 479px; }

.center { flex: 1; min-width: 0; display: flex; flex-direction: column; }
.tools { height: 53px; flex: none; display: flex; }
.preview-btn { padding: 6px 15px 0 14px; }
.preview-btn svg { width: 22px; height: 40px; }
.sep.tall { height: 42px; margin: 6px 8px 0 0; }
.tools-right { flex: 1; min-width: 0; }
.row1 { height: 25px; display: flex; align-items: center; gap: 11px; padding-left: 3px; }
.row1 svg { width: 16px; height: 16px; }
.row1 .sep { margin: 0 -3px; }
.badge { width: 14px; height: 14px; margin: 0 1px; border-radius: 7px; background: #fa2c0a; color: #fff; font: 10px/14px "Liberation Sans", sans-serif; text-align: center; }
.theme { display: flex; align-items: center; gap: 4px; }
.doc-tabs { height: 28px; display: flex; align-items: center; background: #e0e0e2; }
.new { margin: 0 4px 0 8px; }
.doc-tab { width: 241px; height: 28px; display: flex; align-items: center; gap: 6px; padding: 0 6px 0 5px; background: #f4f4f6; border: 1px solid #c9c9cd; border-width: 1px 1px 0; color: #333; }
.doc-tab .x { margin-left: auto; width: 10px; height: 10px; color: #444; }
.more { width: 12px; height: 10px; margin: 0 11px 0 auto; }
.format { height: 26px; flex: none; display: flex; align-items: center; padding-left: 4px; gap: 8px; }
select { appearance: none; height: 20px; border: 1px solid #d9d9dc; background: #fff url("data:image/svg+xml,%3Csvg xmlns='http://www.w3.org/2000/svg' width='19' height='18'%3E%3Cpath d='M0 0h19v18H0z' fill='%23dcdde0'/%3E%3Cpath d='M6 7l4 4 4-4' fill='none' stroke='%23444' stroke-width='1.200'/%3E%3C/svg%3E") no-repeat right center; padding-left: 5px; }
.font-name { width: 144px; margin-right: -3px; }
.font-size { width: 54px; padding-left: 3px; font-family: "DejaVu Sans Mono", monospace; font-size: 10px; }
.b { width: 14px; font: bold 13px/16px "Liberation Sans", sans-serif; color: #333; }
.b + .b { margin-left: 5px; }
.it { font-style: italic; font-family: "Liberation Serif", serif; }
.un { text-decoration: underline; }
.format .c { width: 8px; height: 8px; margin: 0 3px 0 -1px; }
.color-a { width: 16px; height: 16px; border-bottom: 4px solid #000; font: bold 13px/12px "Liberation Sans", sans-serif; text-align: center; color: #333; }
.format .c + .sep { margin-left: -3px; }
.color-a ~ svg:not(.c):not(.shape) { margin-right: 4px; }
.ab, .format .fx { margin-right: 3px; }
.format .widget { margin-left: 6px; }
.ab { font: bold 12px/16px "Liberation Sans", sans-serif; width: 15px; color: #333; }
.fx { font: bold 14px/16px "Liberation Serif", serif; color: #333; width: 16px; white-space: nowrap; }
.fx small { font-size: 8px; }
.format .shape { width: 24px; height: 16px; }
.ruler { height: 17px; flex: none; padding-left: 29px; background: #b1b1b1; border-bottom: 1px solid #8e8e8e; overflow: hidden; }
.marks { display: flex; height: 16px; background: repeating-linear-gradient(90deg, #8e8e8e 0 1px, transparent 1px 10px) 0 100% / 100% 5px no-repeat, repeating-linear-gradient(90deg, #8e8e8e 0 1px, transparent 1px 50px) 0 100% / 100% 11px no-repeat; }
.marks span { flex: 0 0 100px; border-left: 1px solid #8e8e8e; padding-left: 2px; font: 10px/13px "Liberation Sans", sans-serif; color: #333; }
.param { height: 80px; flex: none; display: flex; background: #b1b1b1; }
.vruler { width: 30px; border-right: 1px solid #8e8e8e; background: repeating-linear-gradient(transparent 0 9px, #8e8e8e 9px 10px) 25px 0 / 4px 80px no-repeat, linear-gradient(#8e8e8e, #8e8e8e) 18px 49px / 11px 1px no-repeat; }
.vruler span { display: block; width: 10px; margin-left: 14px; font: 9px/8px "Liberation Sans", sans-serif; writing-mode: vertical-rl; color: #333; }
.param-canvas { width: 1001px; border-top: 1px solid #9a9a9a; border-right: 1px solid #8e8e8e; display: flex; justify-content: center; gap: 21px; padding: 14px 0 0 274px; }
.param-canvas svg { width: 30px; height: 30px; }
.param-edge { width: 9px; background: #6f9fab; }
.gap-strip { height: 10px; flex: none; background: #d9d9db; }
.sheet { flex: 1; min-height: 0; display: flex; }
.sheet-main { flex: 1; min-width: 0; display: flex; flex-direction: column; overflow: hidden; background: #fff; }
.cols { display: flex; height: 20px; flex: none; border-bottom: 1px solid #c2c2c4; }
.cols span { flex: 0 0 72px; border-right: 1px solid #d0d0d2; text-align: center; font: 10px/22px "DejaVu Serif", serif; }
.cols .corner { flex-basis: 25px; background: #f0f0f2; color: #888; }
.grid { flex: 1; min-height: 0; overflow: hidden; background: repeating-linear-gradient(90deg, transparent 0 71px, #c2c2c4 71px 72px) 25px 0, repeating-linear-gradient(transparent 0 18px, #c2c2c4 18px 19px); }
.rownums { width: 25px; }
.rownums li { height: 19px; padding-left: 8px; background: #f4f4f6; border-bottom: 1px solid #d0d0d2; font: 11px/18px "Liberation Sans", sans-serif; }
.rownums li:first-child { background: #cdeaf7; }
.vscroll { width: 17px; flex: none; display: flex; flex-direction: column; background: #f4f4f6; padding: 0 1px; }
.vscroll svg, .hscroll svg { width: 15px; height: 15px; background: #fff; }
.vscroll div { flex: 1; background: #e1e1e1; margin-bottom: 22px; }
.hscroll { height: 16px; flex: none; display: flex; align-items: center; }
.hscroll div { flex: 1; margin-right: 75px; height: 15px; background: #e1e1e1; }
.status { height: 21px; flex: none; display: flex; align-items: center; justify-content: flex-end; gap: 8px; padding-right: 4px; }
.status svg { width: 8px; height: 8px; margin-right: 8px; }
.status .pm { width: 12px; height: 12px; margin: 0; }
.status input[type=range] { appearance: none; width: 214px; height: 12px; margin: 0 4px 0 0; background: linear-gradient(#d8d8da, #d8d8da) 0 6px / 100% 1px no-repeat; }
.status input::-webkit-slider-thumb { appearance: none; width: 4px; height: 12px; border-radius: 2px; background: #333; }
.status .zoom { width: 35px; height: 20px; border: 1px solid #d9d9dc; background: #fff; padding-left: 3px; margin-right: -4px; }

.strip { width: 40px; flex: none; background: #e8e8e8; display: flex; flex-direction: column; align-items: center; gap: 4px; }
.strip .fold { width: 10px; height: 10px; margin: 7px 0 8px; }
.strip button { width: 32px; height: 28px; display: flex; align-items: center; justify-content: center; }
.strip button svg { width: 16px; height: 16px; }
.strip .on { background: #f4f4f6; }
.right { width: 246px; flex: none; }
.right h2 { height: 27px; padding: 0 6px 0 10px; display: flex; align-items: center; justify-content: space-between; border-bottom: 1px solid #d9d9dc; margin-bottom: 10px; }
.right h2 svg { width: 12px; height: 12px; }
.prop { display: flex; height: 20px; margin-bottom: 10px; padding: 0 10px; align-items: center; }
.prop label { width: 56px; flex: none; white-space: nowrap; }
.prop input, .prop select { flex: 1; min-width: 0; height: 20px; background-color: #fff; border: 1px solid #d9d9dc; }
.prop input { padding-left: 3px; }
.sans { font: 12px "Open Sans", sans-serif; }
.wide-label, .narrow { padding-right: 12px; }
.wide-label label { width: 68px; }
.prop .fx { width: 20px; height: 20px; margin-left: 5px; background: #fff; border: 1px solid #d9d9dc; }
.prop > select:first-child { margin-left: 44px; }
.props-tabs { margin-bottom: 10px; gap: 2px; }
.props-tabs .on { background: #eeeef0; }
.lower { display: flex; flex-direction: column; gap: 10px; margin: 89px 13px 0 54px; }
.lower .flat { height: 24px; border: 0; background: #ececec url("data:image/svg+xml,%3Csvg xmlns='http://www.w3.org/2000/svg' width='20' height='8'%3E%3Cpath d='M6 2h8l-4 4z' fill='%23aaa'/%3E%3C/svg%3E") no-repeat right center; }
.order { height: 20px; background: #fff; border: 1px solid #d9d9dc; padding-left: 98px; }
.taskbar { height: 8px; flex: none; overflow: hidden; background: linear-gradient(90deg, #222 0, #2c2c2c 316px, #555 317px 364px, #474747 365px 1180px, #1d2a1d 1400px, #1a2a14 1750px, #111 100%); color: #fff; padding-left: 1818px; font-size: 11px; }
.taskbar time { display: block; line-height: 16px; }

.win { position: absolute; background: #f4f4f6; border: 1px solid #1883d7; box-shadow: 0 2px 12px rgba(0, 0, 0, .45); overflow: hidden; display: flex; flex-direction: column; }
.win-title { height: 25px; flex: none; display: flex; align-items: center; justify-content: space-between; padding: 0 10px 2px 3px; background: #0078d7; color: #fff; }
.win-title.light { background: #fff; color: #999; }
.win-title svg { width: 12px; height: 12px; }
.btn { height: 20px; border: 1px solid #d9d9dc; background: #fff; display: flex; align-items: center; justify-content: center; gap: 5px; white-space: nowrap; }
label { white-space: nowrap; }
input[type=checkbox] { appearance: none; flex: none; width: 13px; height: 13px; margin-right: 3px; background: #2f8fee url("data:image/svg+xml,%3Csvg xmlns='http://www.w3.org/2000/svg' width='13' height='13'%3E%3Cpath d='M3 7l3 3 5-7' fill='none' stroke='%23fff' stroke-width='1.800'/%3E%3C/svg%3E"); }
input[type=radio] { appearance: none; flex: none; width: 13px; height: 13px; margin-right: 4px; border: 1px solid #aaa; border-radius: 7px; background: #fafafa; }
input[type=radio]:checked { background: radial-gradient(#2f7fe0 0 3px, #eef4fb 4px); }

.column-dialog { left: 312px; top: 233px; width: 696px; height: 300px; border-color: #aaa; }
.dlg-tabs { display: flex; margin: 6px 0 0 6px; height: 22px; flex: none; }
.dlg-tabs button { width: 38px; height: 22px; background: #d6d7dc; border: 1px solid #8c9fb8; border-bottom: 0; border-radius: 2px 2px 0 0; }
.dlg-tabs .on { width: 40px; background: #f4f4f6; padding-bottom: 5px; }
.pane { flex: 1; margin: 0 5px 0 4px; border: 2px solid #8c9fb8; border-width: 1px 1px 0; }
.pane fieldset { margin: 0 2px; padding: 0 2px; border: 1px solid #e4e4e8; border-radius: 4px; height: 43px; }
.pane legend { padding: 0 4px 0 3px; line-height: 16px; }
.parent { display: flex; align-items: center; margin-left: 40px; height: 24px; }
.pane .cond { margin-top: 10px; height: auto; }
.kinds { display: grid; grid-template-columns: 170px 320px 1fr; height: 30px; align-items: center; border-bottom: 1px solid #e4e4e8; }
.kinds label, .logic label { display: flex; align-items: center; }
.formula { display: flex; height: 44px; padding-top: 3px; border-bottom: 1px solid #e4e4e8; }
.formula label { width: 30px; }
.box { width: 595px; height: 38px; border: 2px solid #d9d9dc; background: #fff; padding: 3px 4px; margin-right: 1px; white-space: nowrap; }
.formula .btn { width: 43px; background: #f4f4f6; }
.logic { display: flex; height: 42px; padding-top: 10px; align-items: center; justify-content: flex-end; gap: 20px; }
.logic .add { width: 50px; margin-left: 47px; }
.logic .edit { width: 50px; margin-left: -5px; gap: 3px; }
.logic svg { width: 13px; height: 13px; }
.conds { display: flex; height: 90px; gap: 1px; padding-left: 1px; }
.cond-list { flex: 1; background: #fff; border: 1px solid #d9d9dc; padding-left: 20px; }
.cond-list .picked { display: inline-block; height: 16px; padding-right: 4px; }
.cond-btns { width: 75px; display: flex; flex-direction: column; gap: 8px; }

.formula-dialog { left: 304px; top: 509px; bottom: 8px; width: 886px; }
.formula-dialog .win-title { height: 30px; justify-content: flex-start; gap: 5px; padding: 0 0 0 9px; }
.formula-dialog .win-title svg { width: 15px; height: 16px; }
.ask { height: 29px; flex: none; display: flex; padding: 2px 0 0 7px; }
.ask label { flex: 0 0 589px; line-height: 20px; }
.ask input { width: 240px; height: 23px; background: #fff; border: 1px solid #d9d9dc; }
.ask .btn { width: 44px; }
.editor { height: 144px; flex: none; margin: 0 4px; background: #fff; font-family: "DejaVu Sans Mono", "Noto Sans CJK SC", monospace; }
.editor div { height: 16px; background: #ffffaa; line-height: 14px; white-space: nowrap; }
.editor i { font-style: normal; }
.editor b { color: #0000e0; }
.editor .p { color: #f00; }
.editor .s { color: #dc009c; }
.editor .n { color: #6400c8; }
.editor .k { color: #7f3030; }
.editor .c { color: #999900; }
.checks { height: 32px; flex: none; display: flex; align-items: center; padding: 0 13px; gap: 14px; }
.checks label { display: flex; align-items: center; }
.checks .btn { width: 64px; }
.checks .verify { width: 80px; margin: 0 -9px 0 auto; }
.lists { flex: 1; min-height: 0; display: grid; grid-template: 24px 1fr / 140px 140px 163px 1fr; column-gap: 4px; padding: 0 4px; }
.lists h3 { line-height: 24px; }
.lists .last { margin-left: -4px; }
.list { border: 1px solid #999; background: #fff; }
.list li { height: 17px; line-height: 17px; padding-left: 1px; }
.vars { border: 1px solid #999; background: linear-gradient(#e5e5e7, #e5e5e7) 152px 1px / 8px 227px no-repeat, #fff; overflow: hidden; }
.vars li { height: 15px; line-height: 15px; padding-left: 40px; background: linear-gradient(#e4e4e4, #e4e4e4) 27px 0 / 1px 15px no-repeat, linear-gradient(#e4e4e4, #e4e4e4) 27px 8px / 9px 1px no-repeat; }
.vars .top { display: flex; align-items: center; height: 16px; padding-left: 4px; background: none; }
.vars .tw { width: 8px; height: 8px; margin-right: 9px; }
.vars .vi { width: 14px; height: 12px; margin-right: 5px; }
.explain { background: #fff; border: 1px solid #d9d9dc; margin-left: -3px; padding: 3px; white-space: nowrap; overflow: hidden; }
.explain p { line-height: 15px; }

.preview-dialog { left: 1169px; top: 243px; width: 657px; height: 599px; box-shadow: 0 2px 10px rgba(0, 0, 0, .6); }
.preview-dialog fieldset { flex: 1; margin: 0 6px; padding: 0 2px 2px; border: 1px solid #a0a096; }
.preview-dialog legend { padding: 0 3px; margin-left: 0; }
.counts { display: flex; align-items: center; height: 43px; padding-left: 10px; }
.counts label { margin-right: 5px; }
.counts input { width: 32px; height: 20px; background: #fff; border: 1px solid #d9d9dc; padding-left: 3px; margin-right: 15px; }
.counts svg { width: 14px; height: 14px; }
.counts input + svg { margin-left: -4px; }
.table-box { height: 479px; border: 1px solid #ccc; background: linear-gradient(#e3e3e3, #e3e3e3) 0 0 / 100% 21px no-repeat; }
table { width: 375px; table-layout: fixed; border-collapse: collapse; }
th { height: 21px; padding: 0 0 0 1px; font-weight: 400; text-align: left; white-space: nowrap; border-right: 1px solid #bbb; }
td { height: 20px; padding: 0 0 0 1px; background: #fff; border: 1px solid #ccc; white-space: nowrap; line-height: 16px; }
td:first-child { border-left: 0; }
.ok-row { height: 31px; flex: none; display: flex; justify-content: flex-end; gap: 10px; padding: 6px 15px 0 0; }
.ok-row .btn { width: 44px; }

.mark { position: absolute; border: 4px solid #fb3938; }
.mark-tab { left: 355px; top: 262px; width: 51px; height: 38px; }
.mark-formula { left: 307px; top: 550px; width: 328px; height: 54px; border-width: 3px; }
.mark-years { left: 1401px; top: 388px; width: 67px; height: 90px; border-width: 3px; }
.arrow { position: absolute; left: 704px; top: 448px; width: 702px; height: 152px; }
.remark { position: absolute; left: 1304px; top: 553px; font-size: 16px; line-height: 24px; color: #fb3938; }
```
